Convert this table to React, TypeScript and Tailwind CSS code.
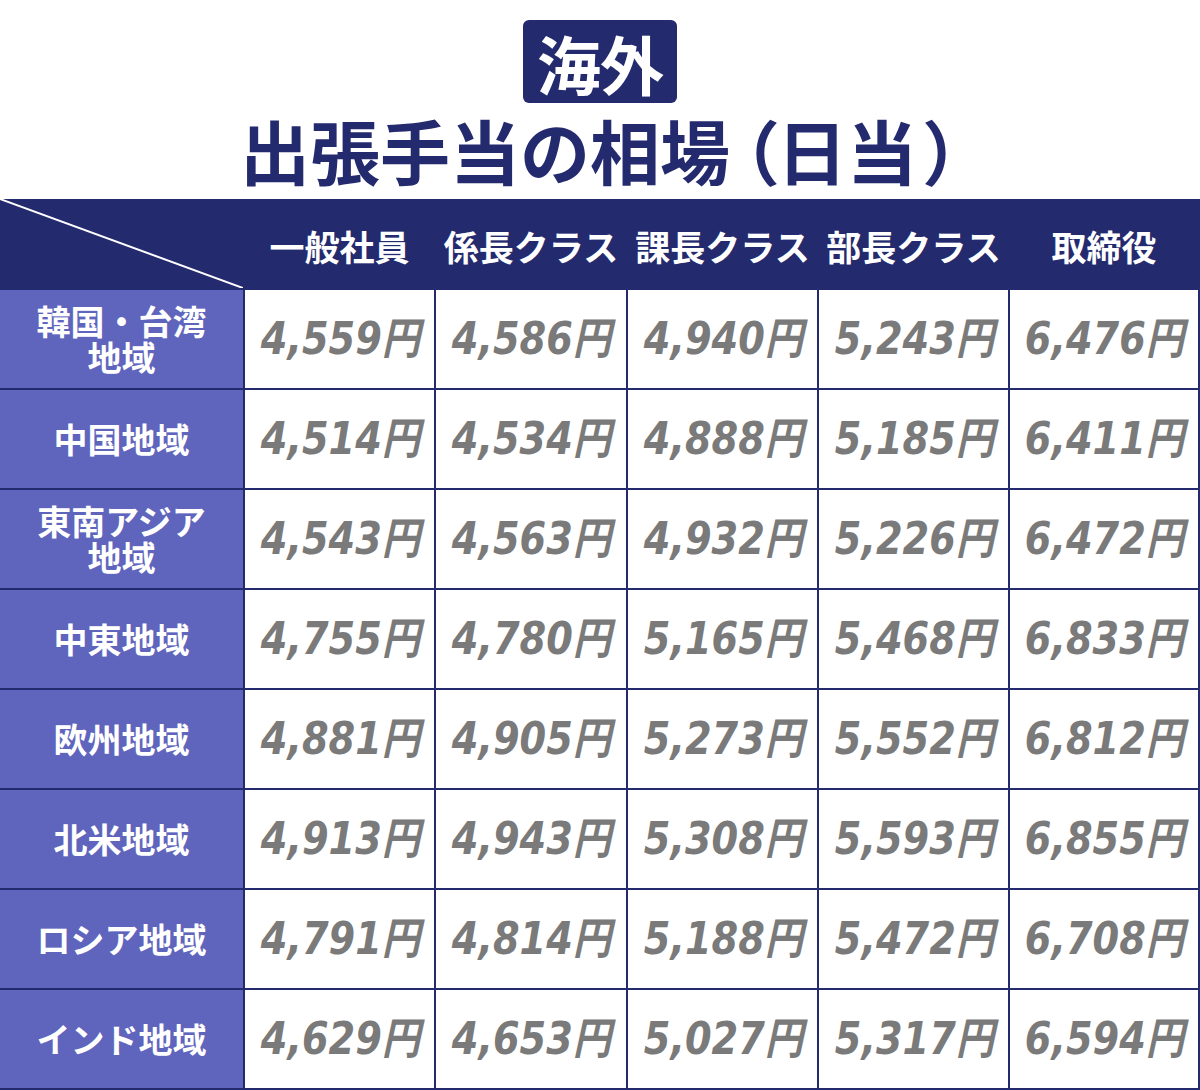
import React from "react";

const cols = ["一般社員", "係長クラス", "課長クラス", "部長クラス", "取締役"];

const rows: { label: string[]; values: string[] }[] = [
    { label: ["韓国・台湾", "地域"], values: ["4,559", "4,586", "4,940", "5,243", "6,476"] },
    { label: ["中国地域"], values: ["4,514", "4,534", "4,888", "5,185", "6,411"] },
    { label: ["東南アジア", "地域"], values: ["4,543", "4,563", "4,932", "5,226", "6,472"] },
    { label: ["中東地域"], values: ["4,755", "4,780", "5,165", "5,468", "6,833"] },
    { label: ["欧州地域"], values: ["4,881", "4,905", "5,273", "5,552", "6,812"] },
    { label: ["北米地域"], values: ["4,913", "4,943", "5,308", "5,593", "6,855"] },
    { label: ["ロシア地域"], values: ["4,791", "4,814", "5,188", "5,472", "6,708"] },
    { label: ["インド地域"], values: ["4,629", "4,653", "5,027", "5,317", "6,594"] },
];

const jp = { fontFamily: '"Noto Sans CJK JP", sans-serif' };
const num = { fontFamily: '"DejaVu Sans", "Noto Sans CJK JP", sans-serif' };

export default function App() {
    return (
        <div className="w-[1200px] h-[1090px] bg-white overflow-hidden" style={jp}>
            {/* Title */}
            <div className="h-[199px] flex flex-col items-center pt-[20px]">
                <div className="h-[83px] w-[154px] rounded-[6px] bg-[#242a6e] flex items-center justify-center">
                    <span className="text-white text-[64px] font-bold leading-none tracking-[-1px]">海外</span>
                </div>
                <h1 className="mt-[8px] text-[#242a6e] text-[70px] font-bold leading-[78px] whitespace-nowrap">
                    出張手当の相場
                    <span className="ml-[12px] [font-feature-settings:'palt']">（</span>
                    日当
                    <span className="ml-[8px] [font-feature-settings:'palt']">）</span>
                </h1>
            </div>

            {/* Table */}
            <div className="grid grid-cols-[243px_189px_190px_189px_189px_188px] grid-rows-[89px_repeat(8,98px)] bg-[#242a6e] gap-[2px] w-[1200px] pr-[2px] pb-[2px]">
                <div className="relative bg-[#242a6e] overflow-hidden">
                    <svg className="absolute inset-0" width="243" height="89" viewBox="0 0 243 89">
                        <line x1="0" y1="0" x2="243" y2="89" stroke="white" strokeWidth="2" />
                    </svg>
                </div>
                {cols.map((c) => (
                    <div key={c} className="bg-[#242a6e] flex items-center justify-center pt-[4px]">
                        <span className="text-white text-[35px] font-bold leading-none whitespace-nowrap">{c}</span>
                    </div>
                ))}
                {rows.map((r) => (
                    <React.Fragment key={r.label.join("")}>
                        <div className="bg-[#5f65bd] flex items-center justify-center">
                            <p className="text-white text-[34px] font-bold leading-[36px] text-center whitespace-nowrap">
                                {r.label.map((l, i) => (
                                    <React.Fragment key={l}>
                                        {i > 0 && <br />}
                                        {l}
                                    </React.Fragment>
                                ))}
                            </p>
                        </div>
                        {r.values.map((v, i) => (
                            <div key={i} className="bg-white flex items-center justify-center">
                                <span className="text-[#7a7a7a] text-[44px] font-bold italic leading-none whitespace-nowrap scale-x-[0.87] pl-[2px]" style={num}>
                                    {v}円
                                </span>
                            </div>
                        ))}
                    </React.Fragment>
                ))}
            </div>
        </div>
    );
}
